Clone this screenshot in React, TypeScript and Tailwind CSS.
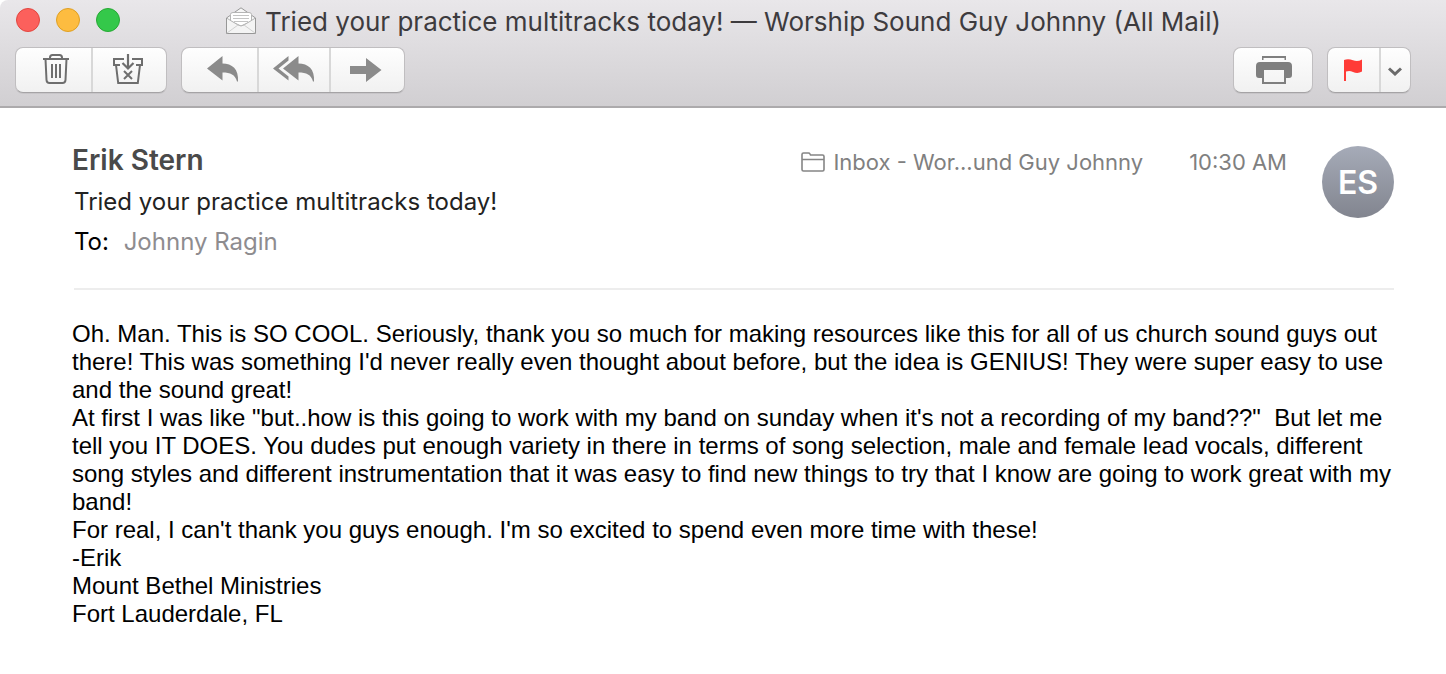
import React from 'react';

interface ToolButtonProps {
  label: string;
  className: string;
  children: React.ReactNode;
}

const ToolButton: React.FC<ToolButtonProps> = ({ label, className, children }) => (
  <button type="button" aria-label={label} className={`h-full flex items-center justify-center ${className}`}>
    {children}
  </button>
);

const ToolGroup: React.FC<{ children: React.ReactNode }> = ({ children }) => (
  <div className="h-[46px] flex rounded-lg border border-[#c0bec0] border-b-[#a5a3a5] bg-linear-to-b from-[#fefefe] to-[#f1f1f1] overflow-hidden shadow-[0_1px_0_rgba(0,0,0,0.06)]">
    {children}
  </div>
);

const EnvelopeIcon = () => (
  <svg width="32" height="28" viewBox="0 0 32 28" fill="none" stroke="#979797" aria-hidden="true">
    <path d="M1.5 11 16 .8 30.500 11V26.500H1.500Z" fill="#f6f6f6" />
    <path d="M5.500 14V7.500Q5.500 5.500 8 5.500H24Q26.500 5.500 26.500 7.500V14L16 19Z" fill="#fff" stroke="#b5b5b5" />
    <path d="M8 8.500H24M8 11.500H24M9 14.500H23" stroke="#c4c4c4" />
    <path d="M1.500 11 13 18Q16 20 19 18L30.500 11V26.500H1.500Z" fill="#f4f4f4" stroke="#b5b5b5" />
    <path d="M2 26 13 18M30 26 19 18" stroke="#d0d0d0" />
    <path d="M1.500 11V25.500Q1.500 26.500 2.500 26.500H29.500Q30.500 26.500 30.500 25.500V11" />
  </svg>
);

const TrashIcon = () => (
  <svg width="26" height="30" viewBox="0 0 26 30" fill="none" stroke="#6e6e6e" strokeWidth="2" aria-hidden="true">
    <path d="M0 5H26M7 5V3.500Q7 1 9.500 1H16.500Q19 1 19 3.500V5" />
    <path d="M2.500 5 3.500 26Q3.700 29 6.500 29H19.500Q22.300 29 22.500 26L23.500 5" />
    <path d="M9 10V24M13 10V24M17 10V24" />
  </svg>
);

const JunkIcon = () => (
  <svg width="30" height="30" viewBox="0 0 30 30" fill="none" stroke="#6e6e6e" strokeWidth="2" aria-hidden="true">
    <path d="M11 5H1V11H7M19 5H29V11H23" />
    <path d="M3 11 5.200 29H24.800L27 11" />
    <path d="M15 0V14M9.500 9 15 14.500 20.500 9" strokeWidth="2.200" />
    <path d="M11 17 19 25M19 17 11 25" />
  </svg>
);

const ReplyIcon = () => (
  <svg width="32" height="26" viewBox="0 0 32 26" fill="#8b8b8b" aria-hidden="true">
    <path d="M0 12.500 15.500 0V7.500C25 7.500 32 13 31 25.500H30C28 18.500 23.500 16.500 15.500 16.500V24.500Z" />
  </svg>
);

const ReplyAllIcon = () => (
  <svg width="42" height="26" viewBox="0 0 42 26" fill="#8b8b8b" aria-hidden="true">
    <path d="M15.500 0V4.500L5.500 12.500 15.500 20.500V24.500L0 12.500Z" />
    <path d="M10 12.500 25.500 0V7.500C35 7.500 42 13 41 25.500H40C38 18.500 33.500 16.500 25.500 16.500V24.500Z" />
  </svg>
);

const ForwardIcon = () => (
  <svg width="32" height="24" viewBox="0 0 32 24" fill="#8b8b8b" aria-hidden="true">
    <path d="M0 8H16V0L31.500 12 16 24V16H0Z" />
  </svg>
);

const PrintIcon = () => (
  <svg width="36" height="28" viewBox="0 0 36 28" fill="#7f7f7f" aria-hidden="true">
    <path d="M6 0H30V4H28.500V2H7.500V4H6Z" />
    <path d="M4 6H32Q36 6 36 10V19Q36 22 33 22H30V28H6V22H3Q0 22 0 19V10Q0 6 4 6ZM8 14V26H28V14Z" fillRule="evenodd" />
  </svg>
);

const FlagIcon = () => (
  <svg width="18" height="22" viewBox="0 0 18 22" fill="#ff3b37" aria-hidden="true">
    <path d="M0 1C3-.3 6 0 9 1.300C12 2.600 15 2.300 18 .6V12.600C15 14.300 12 14.300 9 13C6.500 11.900 4.500 11.900 2 12.600V22H0Z" />
  </svg>
);

const ChevronIcon = () => (
  <svg width="14" height="9" viewBox="0 0 14 9" fill="none" stroke="#6b6b6b" strokeWidth="3" aria-hidden="true">
    <path d="M1 1.500 7 7 13 1.500" />
  </svg>
);

const FolderIcon = () => (
  <svg width="24" height="20" viewBox="0 0 24 20" fill="none" stroke="#858585" strokeWidth="1.600" aria-hidden="true">
    <path d="M1 17.500V2.500Q1 1 2.500 1H7.500Q8.500 1 9 2L9.500 3H21.500Q23 3 23 4.500V17.500Q23 19 21.500 19H2.500Q1 19 1 17.500ZM1 7.500H23" />
  </svg>
);

const windowControls = [
  { label: 'Close', color: 'bg-[#fc605c] border-[#e2463f]' },
  { label: 'Minimize', color: 'bg-[#fdbc40] border-[#dfa023]' },
  { label: 'Zoom', color: 'bg-[#34c84a] border-[#27a934]' },
];

const paragraphs = [
  'Oh. Man. This is SO COOL. Seriously, thank you so much for making resources like this for all of us church sound guys out there! This was something I\'d never really even thought about before, but the idea is GENIUS! They were super easy to use and the sound great!',
  'At first I was like "but..how is this going to work with my band on sunday when it\'s not a recording of my band??"\u00a0 But let me tell you IT DOES. You dudes put enough variety in there in terms of song selection, male and female lead vocals, different song styles and different instrumentation that it was easy to find new things to try that I know are going to work great with my band!',
  'For real, I can\'t thank you guys enough. I\'m so excited to spend even more time with these!',
  '-Erik',
  'Mount Bethel Ministries',
  'Fort Lauderdale, FL',
];

export default function App() {
  return (
    <div className="min-h-screen bg-white font-['Inter',sans-serif] text-black">
      <header className="rounded-tl-lg border-b-2 border-[#acaaac] bg-linear-to-b from-[#e9e7ea] to-[#d1cfd2] pb-[13px]">
        <div className="h-[47px] grid grid-cols-[1fr_auto_1fr] items-start">
          <div className="flex gap-4 pl-4 pt-2">
            {windowControls.map(c => (
              <button key={c.label} type="button" aria-label={c.label} className={`size-6 rounded-full border ${c.color}`} />
            ))}
          </div>
          <div className="h-[42px] flex items-center gap-2 text-[26px] text-[#3d3b3e]">
            <EnvelopeIcon />
            <h1>Tried your practice multitracks today! — Worship Sound Guy Johnny (All Mail)</h1>
          </div>
        </div>

        <div className="flex items-center pl-[15px] pr-[35px]">
          <ToolGroup>
            <ToolButton label="Delete" className="w-[77px] pl-1 pb-0.5 border-r-2 border-[#d8d8d8]"><TrashIcon /></ToolButton>
            <ToolButton label="Junk" className="w-[73px] pr-1 pb-0.5"><JunkIcon /></ToolButton>
          </ToolGroup>
          <div className="w-3.5" />
          <ToolGroup>
            <ToolButton label="Reply" className="w-[77px] pl-1.5 pb-0.5 border-r-2 border-[#d8d8d8]"><ReplyIcon /></ToolButton>
            <ToolButton label="Reply all" className="w-[72px] pb-0.5 border-r-2 border-[#d8d8d8]"><ReplyAllIcon /></ToolButton>
            <ToolButton label="Forward" className="w-[73px] pr-1"><ForwardIcon /></ToolButton>
          </ToolGroup>
          <div className="ml-auto flex gap-3.5">
            <ToolGroup>
              <ToolButton label="Print" className="w-[78px] pl-0.5"><PrintIcon /></ToolButton>
            </ToolGroup>
            <ToolGroup>
              <ToolButton label="Flag" className="w-[53px] pr-0.5 border-r-2 border-[#d8d8d8]"><FlagIcon /></ToolButton>
              <ToolButton label="Flag options" className="w-[29px] pr-0.5 pt-0.5"><ChevronIcon /></ToolButton>
            </ToolGroup>
          </div>
        </div>
      </header>

      <main className="pl-[72px] pr-[52px] pt-[38px]">
        <section className="flex items-start pb-7">
          <div className="text-2xl">
            <h2 className="h-7 leading-7 text-[28px] font-semibold text-[#4a4a4a]">Erik Stern</h2>
            <p className="mt-2 pl-0.5 h-10 leading-10 text-[#222]">Tried your practice multitracks today!</p>
            <p className="pl-0.5 h-[38px] leading-10">
              To: <a href="#" className="ml-2 text-[#8e8c8f]">Johnny Ragin</a>
            </p>
          </div>
          <div className="ml-auto flex items-center h-8 text-[22px] text-[#808080]">
            <FolderIcon />
            <span className="ml-2">Inbox - Wor...und Guy Johnny</span>
            <time className="ml-[46px]">10:30 AM</time>
          </div>
          <div className="ml-[35px] size-[72px] pt-0.5 rounded-full flex items-center justify-center bg-linear-to-b from-[#a6abb8] to-[#82858f] text-[32px] font-semibold text-white">
            ES
          </div>
        </section>

        <hr className="ml-0.5 border-t-2 border-[#ededed]" />

        <article className="pt-[30px] pb-11 text-2xl leading-7 font-['Liberation_Sans',Arial,sans-serif]">
          {paragraphs.map(p => (
            <p key={p}>{p}</p>
          ))}
        </article>
      </main>
    </div>
  );
}
